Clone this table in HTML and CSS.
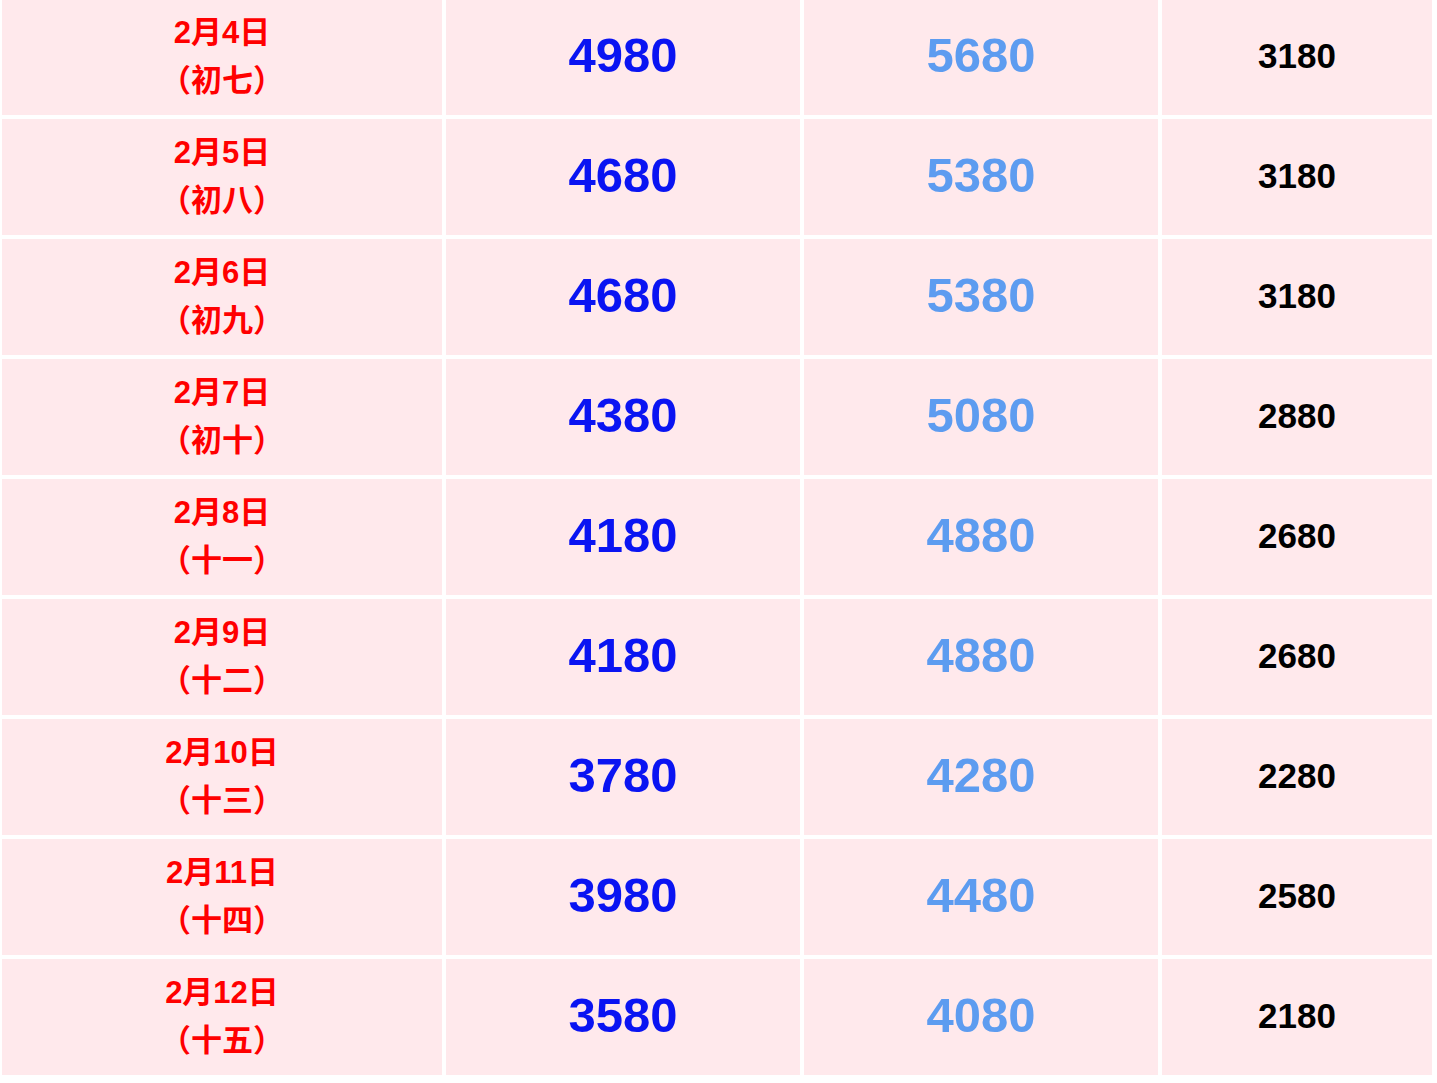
FILE: index.html
```html
<!DOCTYPE html>
<html lang="zh-CN">
<head>
<meta charset="utf-8">
<title>价格表</title>
<link rel="stylesheet" href="styles.css">
</head>
<body>
<div class="table">
  <div class="cell date"><span>2月4日</span><span>（初七）</span></div>
  <div class="cell p1">4980</div>
  <div class="cell p2">5680</div>
  <div class="cell p3">3180</div>

  <div class="cell date"><span>2月5日</span><span>（初八）</span></div>
  <div class="cell p1">4680</div>
  <div class="cell p2">5380</div>
  <div class="cell p3">3180</div>

  <div class="cell date"><span>2月6日</span><span>（初九）</span></div>
  <div class="cell p1">4680</div>
  <div class="cell p2">5380</div>
  <div class="cell p3">3180</div>

  <div class="cell date"><span>2月7日</span><span>（初十）</span></div>
  <div class="cell p1">4380</div>
  <div class="cell p2">5080</div>
  <div class="cell p3">2880</div>

  <div class="cell date"><span>2月8日</span><span>（十一）</span></div>
  <div class="cell p1">4180</div>
  <div class="cell p2">4880</div>
  <div class="cell p3">2680</div>

  <div class="cell date"><span>2月9日</span><span>（十二）</span></div>
  <div class="cell p1">4180</div>
  <div class="cell p2">4880</div>
  <div class="cell p3">2680</div>

  <div class="cell date"><span>2月10日</span><span>（十三）</span></div>
  <div class="cell p1">3780</div>
  <div class="cell p2">4280</div>
  <div class="cell p3">2280</div>

  <div class="cell date"><span>2月11日</span><span>（十四）</span></div>
  <div class="cell p1">3980</div>
  <div class="cell p2">4480</div>
  <div class="cell p3">2580</div>

  <div class="cell date"><span>2月12日</span><span>（十五）</span></div>
  <div class="cell p1">3580</div>
  <div class="cell p2">4080</div>
  <div class="cell p3">2180</div>
</div>
</body>
</html>
```
FILE: styles.css
```css
html, body {
  margin: 0;
  padding: 0;
  background: #ffffff;
}

.table {
  display: grid;
  grid-template-columns: 440px 354px 354px 1fr;
  grid-auto-rows: 116px;
  gap: 4px;
  margin: -1px 5px 0 2px;
  font-family: "Liberation Sans", Arial, "Noto Sans CJK SC", sans-serif;
  font-weight: bold;
}

.cell {
  background: #ffe9ec;
  display: flex;
  align-items: center;
  justify-content: center;
}

.date {
  flex-direction: column;
  color: #ff0000;
  font-size: 31px;
  line-height: 48px;
  padding-bottom: 1px;
}

.date span {
  display: block;
  height: 48px;
}

.p1 {
  color: #0a14f2;
  font-size: 49px;
  padding-bottom: 4px;
}

.p2 {
  color: #5d9cf0;
  font-size: 49px;
  padding-bottom: 4px;
}

.p3 {
  color: #000000;
  font-size: 35px;
  padding-bottom: 3px;
}
```
